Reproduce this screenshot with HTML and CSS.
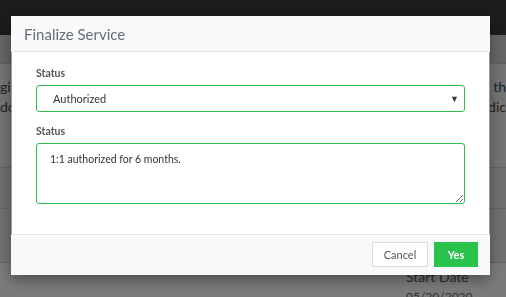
FILE: index.html
```html
<!DOCTYPE html>
<html lang="en">
<head>
    <meta charset="UTF-8">
    <meta name="viewport" content="width=device-width, initial-scale=1.0">
    <title>Finalize Service</title>
    <link rel="stylesheet" href="styles.css">
</head>
<body>
    <div class="topbar"></div>
    <div class="page">
        <div class="subbar"></div>
        <div class="row row-text">
            <div class="line"><span>gie</span><span>r th</span></div>
            <div class="line"><span>do</span><span>edic</span></div>
        </div>
        <div class="row row-mid"></div>
        <div class="row row-low"></div>
        <div class="row row-date">
            <div class="date-col">
                <div class="date-label">Start Date</div>
                <div class="date-value">05/20/2020</div>
            </div>
        </div>
    </div>

    <div class="overlay"></div>

    <div class="modal">
        <div class="modal-header">Finalize Service</div>
        <div class="modal-body">
            <label class="field-label">Status</label>
            <div class="select-box">
                <span>Authorized</span>
                <span class="caret">&#9660;</span>
            </div>
            <label class="field-label">Status</label>
            <textarea class="notes">1:1 authorized for 6 months.</textarea>
        </div>
        <div class="modal-footer">
            <button class="btn btn-cancel">Cancel</button>
            <button class="btn btn-yes">Yes</button>
        </div>
    </div>
</body>
</html>
```

FILE: styles.css
```css
body {
    margin: 0;
    font-family: Lato, "Open Sans", sans-serif;
    background-color: #f2f2f2;
    height: 297px;
    overflow: hidden;
}
.topbar {
    height: 35px;
    background-color: #38383c;
}
.subbar {
    height: 28px;
    background-color: #cacaca;
    border-bottom: 1px solid #bdbdbd;
}
.row {
    border-bottom: 1px solid #c4c4c4;
    overflow: hidden;
}
.row-text {
    height: 104px;
    background-color: #e6e6e6;
    padding-top: 14px;
    box-sizing: border-box;
}
.line {
    display: flex;
    justify-content: space-between;
    font-size: 14px;
    color: #444;
    height: 20px;
}
.row-mid {
    height: 40px;
    background-color: #dedede;
}
.row-low {
    height: 53px;
    background-color: #e0e0e0;
}
.row-date {
    background-color: #f4f4f4;
    height: 40px;
    display: flex;
    justify-content: flex-end;
    padding-right: 26px;
}
.date-col {
    padding-top: 5px;
    width: 74px;
}
.date-label {
    font-size: 14px;
    color: #555;
}
.date-value {
    font-size: 12px;
    color: #666;
    margin-top: 4px;
}
.overlay {
    position: fixed;
    inset: 0;
    background-color: rgba(0, 0, 0, 0.5);
}
.modal {
    position: fixed;
    left: 11px;
    top: 16px;
    width: 479px;
    background-color: #fff;
    box-shadow: 0 5px 12px rgba(0, 0, 0, 0.35);
}
.modal-header {
    height: 36px;
    box-sizing: border-box;
    padding: 9px 13px 0;
    font-size: 15px;
    color: #6a6e73;
    background-color: #f8f9fa;
    border-bottom: 1px solid #e1e4e7;
}
.modal-body {
    padding: 15px 24px 30px;
    display: flex;
    flex-direction: column;
    border-left: 1px solid #9a9a9a;
    border-right: 1px solid #9a9a9a;
}
.field-label {
    font-size: 10.5px;
    font-weight: bold;
    color: #555;
    margin-bottom: 6px;
}
.select-box {
    height: 27px;
    box-sizing: border-box;
    border: 1px solid #2ebd4e;
    border-radius: 3px;
    display: flex;
    align-items: center;
    justify-content: space-between;
    padding: 0 5px 0 16px;
    font-size: 11px;
    color: #333;
    margin-bottom: 13px;
}
.caret {
    font-size: 9px;
    color: #333a45;
}
.notes {
    height: 61px;
    box-sizing: border-box;
    border: 1px solid #2ebd4e;
    border-radius: 3px;
    padding: 9px 13px;
    font-family: inherit;
    font-size: 10.5px;
    color: #333;
    resize: vertical;
    outline: none;
}
.modal-footer {
    height: 41px;
    box-sizing: border-box;
    background-color: #f8f9fa;
    border-top: 1px solid #e1e4e7;
    display: flex;
    justify-content: flex-end;
    align-items: center;
    gap: 6px;
    padding: 0 12px 1px;
}
.btn {
    height: 25px;
    font-family: inherit;
    font-size: 11px;
    border-radius: 0;
    cursor: pointer;
}
.btn-cancel {
    width: 56px;
    background-color: #fff;
    color: #555;
    border: 1px solid #dcdcdc;
}
.btn-yes {
    width: 44px;
    background-color: #28c24d;
    color: #fff;
    font-weight: bold;
    border: none;
}
```
